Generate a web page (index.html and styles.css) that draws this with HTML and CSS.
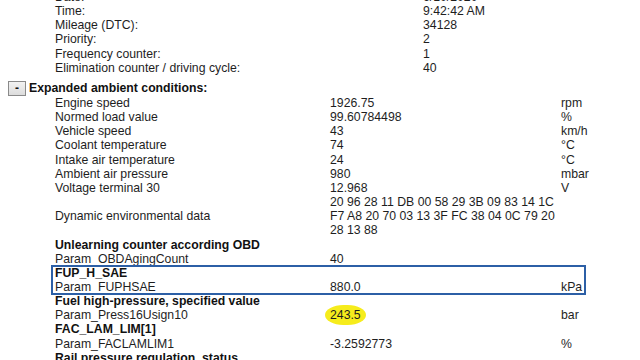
FILE: index.html
```html
<!DOCTYPE html>
<html>
<head>
<meta charset="utf-8">
<link rel="stylesheet" href="styles.css">
</head>
<body>
<div class="page">
  <div class="info">
    <div class="irow"><span>Date:</span><span>6/10/2020</span></div>
    <div class="irow"><span>Time:</span><span>9:42:42 AM</span></div>
    <div class="irow"><span>Mileage (DTC):</span><span>34128</span></div>
    <div class="irow"><span>Priority:</span><span>2</span></div>
    <div class="irow"><span>Frequency counter:</span><span>1</span></div>
    <div class="irow"><span>Elimination counter / driving cycle:</span><span>40</span></div>
  </div>
  <div class="heading"><span class="toggle">-</span><span>Expanded ambient conditions:</span></div>
  <div class="data">
    <div class="row"><span>Engine speed</span><span>1926.75</span><span>rpm</span></div>
    <div class="row"><span>Normed load value</span><span>99.60784498</span><span>%</span></div>
    <div class="row"><span>Vehicle speed</span><span>43</span><span>km/h</span></div>
    <div class="row"><span>Coolant temperature</span><span>74</span><span>°C</span></div>
    <div class="row"><span>Intake air temperature</span><span>24</span><span>°C</span></div>
    <div class="row"><span>Ambient air pressure</span><span>980</span><span>mbar</span></div>
    <div class="row"><span>Voltage terminal 30</span><span>12.968</span><span>V</span></div>
    <div class="row multi"><span class="mid">Dynamic environmental data</span><span>20 96 28 11 DB 00 58 29 3B 09 83 14 1C<br>F7 A8 20 70 03 13 3F FC 38 04 0C 79 20<br>28 13 88</span><span></span></div>
    <div class="row"><b>Unlearning counter according OBD</b><span></span><span></span></div>
    <div class="row"><span>Param_OBDAgingCount</span><span>40</span><span></span></div>
    <div class="boxed">
      <div class="row"><b>FUP_H_SAE</b><span></span><span></span></div>
      <div class="row"><span>Param_FUPHSAE</span><span>880.0</span><span>kPa</span></div>
    </div>
    <div class="row"><b>Fuel high-pressure, specified value</b><span></span><span></span></div>
    <div class="row"><span>Param_Press16Usign10</span><span><mark class="hl">243.5</mark></span><span>bar</span></div>
    <div class="row"><b>FAC_LAM_LIM[1]</b><span></span><span></span></div>
    <div class="row"><span>Param_FACLAMLIM1</span><span>-3.2592773</span><span>%</span></div>
    <div class="row"><b>Rail pressure regulation, status</b><span></span><span></span></div>
  </div>
</div>
</body>
</html>
```
FILE: styles.css
```css
html, body {
  margin: 0;
  padding: 0;
  background: #ffffff;
  overflow: hidden;
}
.page {
  font-family: "Liberation Sans", Arial, sans-serif;
  font-size: 12.25px;
  line-height: 14.15px;
  color: #1e1e1e;
  padding-left: 8px;
}
.info {
  margin-top: -10px;
  padding-left: 47px;
}
.irow {
  display: grid;
  grid-template-columns: 368px auto;
}
.heading {
  display: flex;
  align-items: center;
  gap: 3px;
  margin-top: 6px;
  height: 15px;
  font-weight: bold;
  color: #111;
}
.toggle {
  width: 16px;
  height: 13px;
  border: 1px solid #8a8a8a;
  background: linear-gradient(#f2f2f2, #dcdcdc);
  display: flex;
  align-items: center;
  justify-content: center;
  font-size: 12px;
  line-height: 12px;
}
.data {
  padding-left: 47px;
}
.row {
  display: grid;
  grid-template-columns: 275px 231px auto;
}
.row b {
  color: #111;
}
.row .mid {
  align-self: center;
}
.boxed {
  margin-left: -3px;
  padding-left: 3px;
  width: 530px;
  outline: 2px solid #2c5fa6;
  outline-offset: -1px;
}
.hl {
  background: #f6ec1c;
  color: #1e1e1e;
  padding: 3px 5px;
  margin: -3px -5px;
  border-radius: 45% / 50%;
}
```
